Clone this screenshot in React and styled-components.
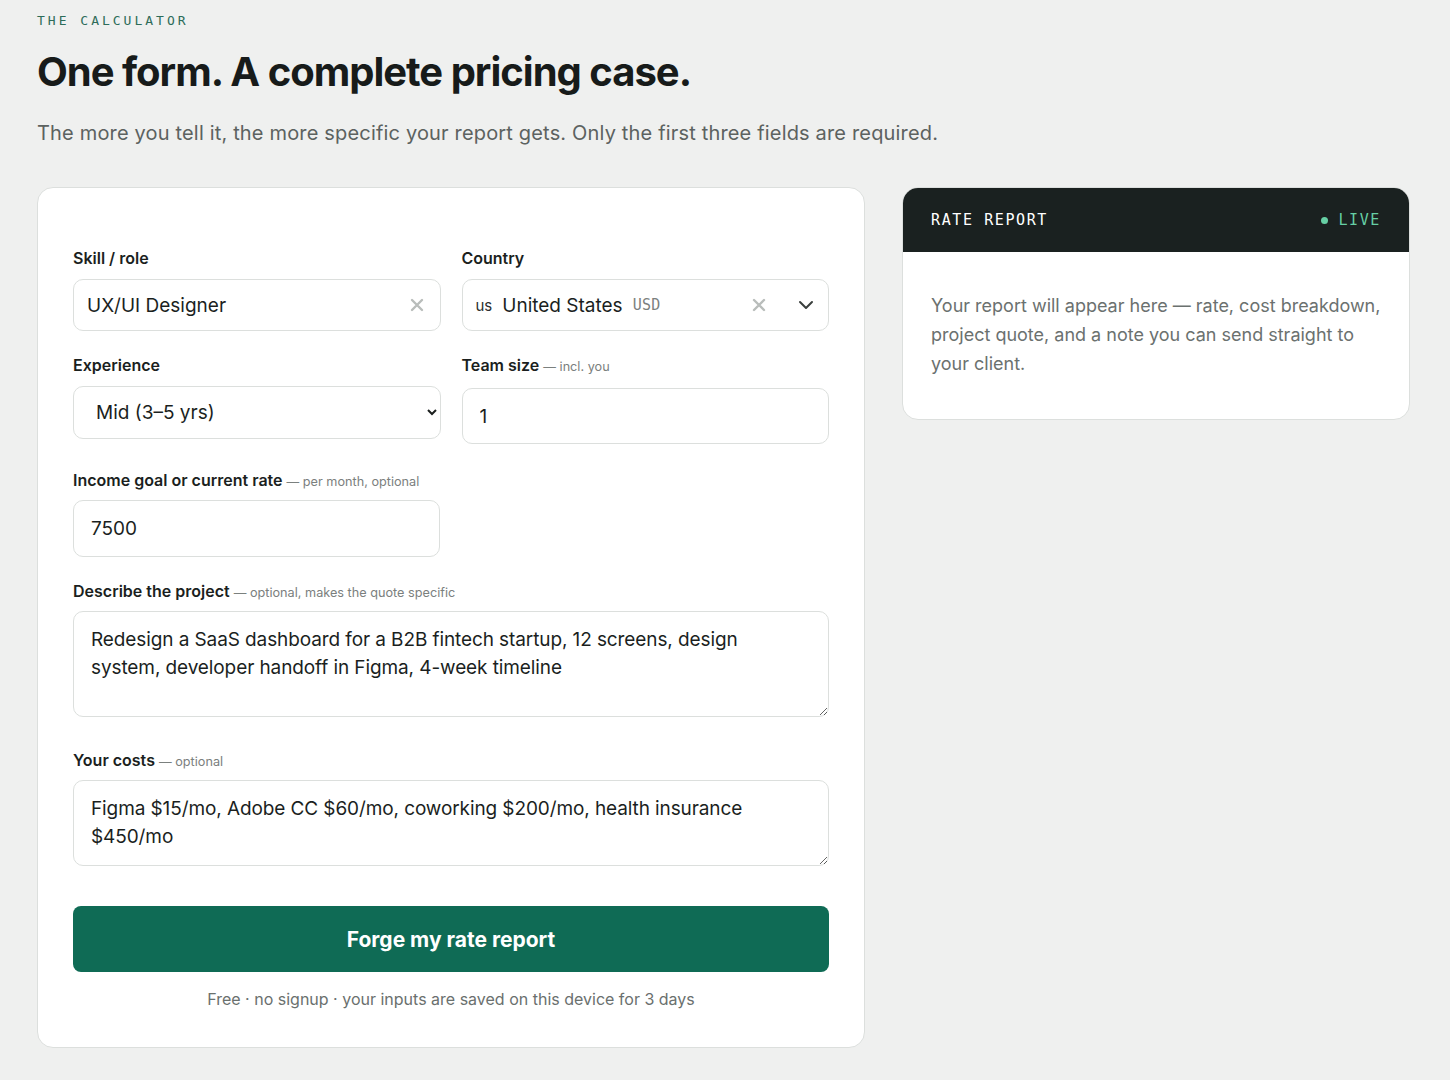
import React from "react";
import styled, { createGlobalStyle } from "styled-components";

const Global = createGlobalStyle`
  * { box-sizing: border-box; }
  html, body { margin: 0; padding: 0; background: #eff0ef; }
  body { font-family: Inter, "Noto Sans", sans-serif; color: #181c1b; }
`;

const Page = styled.div`
  padding: 12px 40px 32px 37px;
`;

const Eyebrow = styled.div`
  font-family: "DejaVu Sans Mono", monospace;
  font-size: 13px;
  letter-spacing: 3px;
  color: #2d6c59;
  line-height: 18px;
`;

const Title = styled.h1`
  margin: 18px 0 0;
  font-family: Inter, sans-serif;
  font-weight: 700;
  font-size: 40px;
  line-height: 48px;
  letter-spacing: -1px;
  color: #171b1a;
`;

const Lead = styled.p`
  margin: 24px 0 0;
  font-size: 20px;
  line-height: 26px;
  letter-spacing: 0.17px;
  color: #5c6260;
`;

const Layout = styled.div`
  display: grid;
  grid-template-columns: 828px 508px;
  gap: 37px;
  margin-top: 41px;
  align-items: start;
`;

const FormCard = styled.form`
  background: #fff;
  border: 1px solid #dcdfdd;
  border-radius: 16px;
  padding: 60px 35px 38px;
  display: flex;
  flex-direction: column;
`;

const Row = styled.div`
  display: grid;
  grid-template-columns: ${(p) => (p.$half ? "367px" : "1fr 1fr")};
  gap: 21px;
  margin-bottom: ${(p) => p.$mb || 24}px;
`;

const Field = styled.div`
  display: flex;
  flex-direction: column;
  margin-bottom: ${(p) => p.$mb || 0}px;
`;

const Label = styled.label`
  font-size: 16px;
  font-weight: 600;
  line-height: 20px;
  color: #1b1f1e;
  margin-bottom: ${(p) => p.$gap ?? 11}px;
`;

const Hint = styled.span`
  font-size: 12.7px;
  font-weight: 400;
  color: #7b807e;
`;

const Box = styled.div`
  height: ${(p) => p.$h || 52}px;
  border: 1px solid #dcdfdd;
  border-radius: 10px;
  background: #fff;
  display: flex;
  align-items: center;
  padding: 0 ${(p) => p.$pr || 14}px 0 ${(p) => p.$pl || 13}px;
  gap: 10px;
`;

const BoxText = styled.span`
  font-size: 19px;
  color: #1b1f1e;
  flex: 1;
`;

const Input = styled.input`
  height: ${(p) => p.$h || 56}px;
  border: 1px solid #dcdfdd;
  border-radius: 10px;
  background: #fff;
  padding: 0 17px;
  font-family: Inter, sans-serif;
  font-size: 19px;
  color: #1b1f1e;
  outline: none;
  width: 100%;
`;

const Select = styled.select`
  height: 53px;
  border: 1px solid #dcdfdd;
  border-radius: 10px;
  background: #fff;
  padding: 0 10px 0 18px;
  font-family: Inter, sans-serif;
  font-size: 19px;
  color: #1b1f1e;
  width: 100%;
  outline: none;
`;

const TextArea = styled.textarea`
  display: block;
  height: ${(p) => p.$h}px;
  border: 1px solid #dcdfdd;
  border-radius: 10px;
  background: #fff;
  padding: 14px 17px;
  font-family: Inter, sans-serif;
  font-size: 19px;
  line-height: 28px;
  letter-spacing: -0.1px;
  color: #1b1f1e;
  width: 100%;
  outline: none;
  resize: vertical;
`;

const Flag = styled.span`
  font-size: 15px;
  color: #2a2e2d;
`;

const Code = styled.span`
  font-family: "DejaVu Sans Mono", monospace;
  font-size: 15px;
  color: #7b807e;
  letter-spacing: 0.3px;
`;

const CountryName = styled.span`
  font-size: 19px;
  color: #1b1f1e;
`;

const Spacer = styled.span`
  flex: 1;
`;

const Icon = styled.svg`
  flex: none;
  margin-right: ${(p) => p.$mr || 0}px;
`;

const Button = styled.button`
  margin-top: 40px;
  height: 66px;
  border: none;
  border-radius: 8px;
  background: #0f6b55;
  color: #fff;
  font-family: Inter, sans-serif;
  font-weight: 700;
  font-size: 21px;
  letter-spacing: 0;
  cursor: pointer;
`;

const Note = styled.p`
  margin: 17px 0 0;
  text-align: center;
  font-size: 16px;
  line-height: 20px;
  color: #6a706e;
`;

const ReportCard = styled.aside`
  background: #fff;
  border: 1px solid #dcdfdd;
  border-radius: 16px;
  overflow: hidden;
`;

const ReportHead = styled.div`
  height: 64px;
  background: #1a2120;
  display: flex;
  align-items: center;
  justify-content: space-between;
  padding: 0 28px 0 28px;
  font-family: "DejaVu Sans Mono", monospace;
  font-size: 15px;
  letter-spacing: 1.6px;
  color: #fff;
`;

const Live = styled.span`
  color: #66cfa4;
  display: flex;
  align-items: center;
  gap: 10px;
`;

const Dot = styled.span`
  width: 7px;
  height: 7px;
  border-radius: 50%;
  background: #66cfa4;
`;

const ReportBody = styled.p`
  margin: 0;
  padding: 39px 28px 41px;
  font-size: 18px;
  line-height: 29px;
  color: #6b716f;
`;

const XIcon = ({ mr }) => (
  <Icon $mr={mr} width="14" height="14" viewBox="0 0 14 14">
    <path d="M2 2 L12 12 M12 2 L2 12" stroke="#b9bdbb" strokeWidth="2.4" strokeLinecap="round" />
  </Icon>
);

export default function App() {
  return (
    <>
      <Global />
      <Page>
        <Eyebrow>THE CALCULATOR</Eyebrow>
        <Title>One form. A complete pricing case.</Title>
        <Lead>The more you tell it, the more specific your report gets. Only the first three fields are required.</Lead>
        <Layout>
          <FormCard onSubmit={(e) => e.preventDefault()}>
            <Row $mb={24}>
              <Field>
                <Label>Skill / role</Label>
                <Box $pr={16}>
                  <BoxText>UX/UI Designer</BoxText>
                  <XIcon />
                </Box>
              </Field>
              <Field>
                <Label>Country</Label>
                <Box $pr={14}>
                  <Flag>us</Flag>
                  <CountryName>United States</CountryName>
                  <Code>USD</Code>
                  <Spacer />
                  <XIcon mr={22} />
                  <Icon width="16" height="10" viewBox="0 0 16 10">
                    <path d="M2 2 L8 8 L14 2" stroke="#3a3f3d" strokeWidth="2" fill="none" strokeLinecap="round" strokeLinejoin="round" />
                  </Icon>
                </Box>
              </Field>
            </Row>
            <Row $mb={26}>
              <Field>
                <Label>Experience</Label>
                <Select defaultValue="mid">
                  <option value="junior">Junior (0–2 yrs)</option>
                  <option value="mid">Mid (3–5 yrs)</option>
                  <option value="senior">Senior (6+ yrs)</option>
                </Select>
              </Field>
              <Field>
                <Label>
                  Team size <Hint>— incl. you</Hint>
                </Label>
                <Input defaultValue="1" />
              </Field>
            </Row>
            <Row $half $mb={24}>
              <Field>
                <Label $gap={8}>
                  Income goal or current rate <Hint>— per month, optional</Hint>
                </Label>
                <Input defaultValue="7500" $h={57} />
              </Field>
            </Row>
            <Field $mb={33}>
              <Label $gap={8}>
                Describe the project <Hint>— optional, makes the quote specific</Hint>
              </Label>
              <TextArea
                $h={106}
                defaultValue="Redesign a SaaS dashboard for a B2B fintech startup, 12 screens, design system, developer handoff in Figma, 4-week timeline"
              />
            </Field>
            <Field>
              <Label $gap={8}>
                Your costs <Hint>— optional</Hint>
              </Label>
              <TextArea
                $h={86}
                defaultValue="Figma $15/mo, Adobe CC $60/mo, coworking $200/mo, health insurance $450/mo"
              />
            </Field>
            <Button type="submit">Forge my rate report</Button>
            <Note>Free · no signup · your inputs are saved on this device for 3 days</Note>
          </FormCard>
          <ReportCard>
            <ReportHead>
              <span>RATE REPORT</span>
              <Live>
                <Dot />
                LIVE
              </Live>
            </ReportHead>
            <ReportBody>
              Your report will appear here — rate, cost breakdown, project quote, and a note you can send straight to your client.
            </ReportBody>
          </ReportCard>
        </Layout>
      </Page>
    </>
  );
}
